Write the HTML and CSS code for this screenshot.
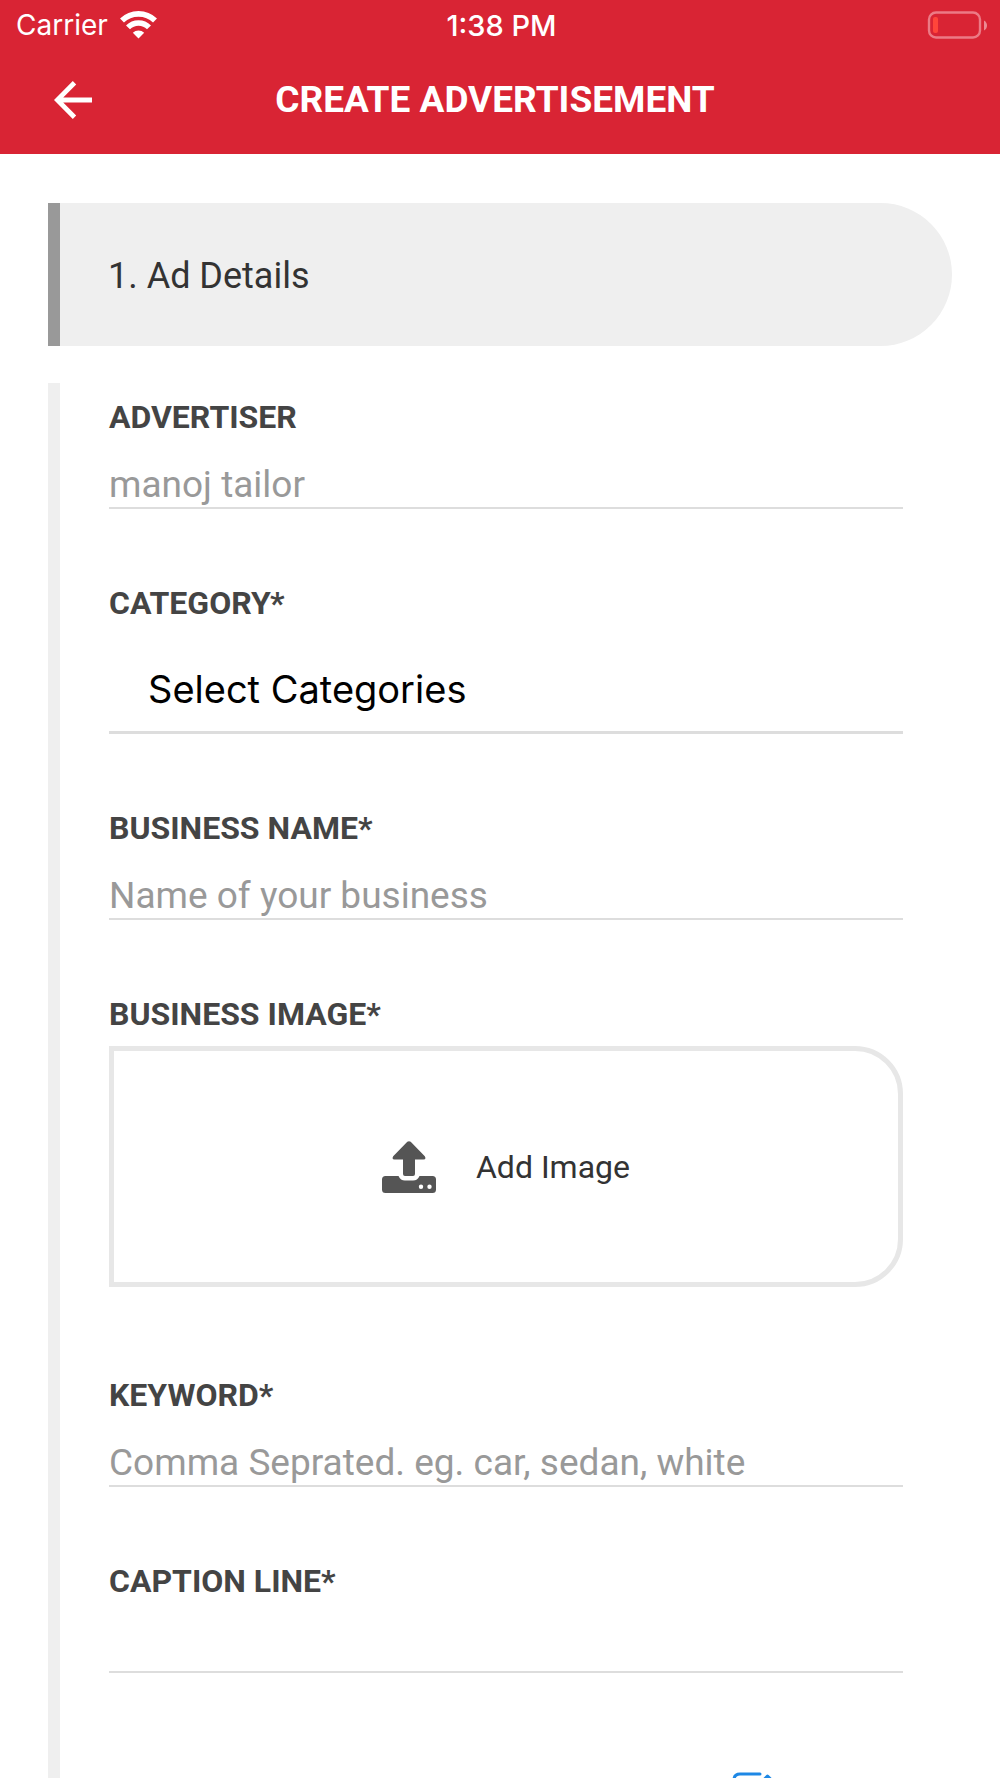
FILE: index.html
```
<!DOCTYPE html>
<html lang="en">
<head>
    <meta charset="UTF-8">
    <meta name="viewport" content="width=device-width, initial-scale=1.0">
    <title>Create Advertisement</title>
    <link rel="stylesheet" href="styles.css">
</head>
<body>

    <header class="header">
        <div class="status-bar">
            <div class="carrier">
                <span>Carrier</span>
                <svg width="37" height="28" viewBox="0 0 37 28" fill="none" stroke="#fff" stroke-width="5.6">
                    <path d="M2 9.6a23.5 23.5 0 0 1 33 0"/>
                    <path d="M8 16.4a14.8 14.8 0 0 1 21 0"/>
                    <path d="M12.8 21.8a8.2 8.2 0 0 1 11.4 0L18.5 27.4z" fill="#fff" stroke="none"/>
                </svg>
            </div>
            <span class="time">1:38 PM</span>
            <div class="battery">
                <svg width="60" height="28" viewBox="0 0 60 28">
                    <rect x="2" y="1.5" width="51" height="25" rx="7" fill="none" stroke="#ec7a85" stroke-width="2.4"/>
                    <rect x="6" y="6" width="5" height="16" rx="2" fill="#ff453a"/>
                    <path d="M57 9.5c4 2 4 8 0 10z" fill="#ec8a93"/>
                </svg>
            </div>
        </div>
        <div class="nav">
            <button class="back" type="button" aria-label="Back">
                <svg width="38" height="38" viewBox="0 0 38 38" fill="none" stroke="#fff" stroke-width="4.8">
                    <path d="M38 19H4M20.5 1.8L3.3 19l17.2 17.2"/>
                </svg>
            </button>
            <h1>CREATE ADVERTISEMENT</h1>
        </div>
    </header>

    <main>
        <h2>1. Ad Details</h2>

        <form class="ad-form">
            <div class="field">
                <label for="advertiser">ADVERTISER</label>
                <input type="text" id="advertiser" placeholder="manoj tailor">
            </div>
            <div class="field">
                <label for="category">CATEGORY*</label>
                <select id="category">
                    <option>Select Categories</option>
                </select>
            </div>
            <div class="field">
                <label for="businessName">BUSINESS NAME*</label>
                <input type="text" id="businessName" placeholder="Name of your business">
            </div>
            <div class="field image-field">
                <label for="businessImage">BUSINESS IMAGE*</label>
                <button class="upload" type="button" id="businessImage">
                    <svg width="54" height="52" viewBox="0 0 54 52" fill="#555">
                        <path d="M25.3 .8Q27 -.5 28.7 .8L42.8 15.2Q44.5 18.5 41.5 18.5H33V33Q33 35 31 35H23Q21 35 21 33V18.5H12.5Q9.5 18.5 11.2 15.2z"/>
                        <path fill-rule="evenodd" d="M3.5 35H16.5Q18.5 39.5 23 39.5H31Q35.5 39.5 37.5 35H50.5Q54 35 54 38.5V48.5Q54 52 50.5 52H3.5Q0 52 0 48.5V38.5Q0 35 3.5 35zM39 43.5a2.2 2.2 0 1 0 0 4.4a2.2 2.2 0 1 0 0-4.4zM47.5 43.5a2.2 2.2 0 1 0 0 4.4a2.2 2.2 0 1 0 0-4.4z"/>
                    </svg>
                    <span>Add Image</span>
                </button>
            </div>
            <div class="field">
                <label for="keyword">KEYWORD*</label>
                <input type="text" id="keyword" placeholder="Comma Seprated. eg. car, sedan, white">
            </div>
            <div class="field">
                <label for="caption">CAPTION LINE*</label>
                <input type="text" id="caption">
            </div>
            <div class="edit-row">
                <button class="edit" type="button" aria-label="Edit">
                    <svg width="44" height="44" viewBox="0 0 44 44" fill="none" stroke="#1e88e5" stroke-width="3" stroke-linecap="round" stroke-linejoin="round">
                        <path d="M28 2H8Q2 2 2 8v28q0 6 6 6h22q6 0 6-6V22"/>
                        <path d="M35.5 4l5 5L22 28l-7 2 2-7z"/>
                    </svg>
                </button>
            </div>
        </form>
    </main>

</body>
</html>
```
FILE: styles.css
```
* { box-sizing: border-box; }
body { display: flex; flex-direction: column; height: 100vh; margin: 0; font-family: Roboto, sans-serif; background-color: white; }
h1, h2 { margin: 0; }
svg { display: block; flex: none; }
button { padding: 0; border: none; background: none; font-family: inherit; cursor: pointer; }

.header { flex: none; color: white; background-color: #d92434; }
.status-bar { display: grid; grid-template-columns: 1fr auto 1fr; align-items: center; height: 50px; padding: 0 13px 0 16px; font-family: Inter, sans-serif; font-size: 28px; }
.carrier { display: flex; align-items: center; gap: 12px; }
.time { font-size: 29px; font-weight: 500; }
.battery { justify-self: end; }
.nav { display: grid; grid-template-columns: 60px 1fr 60px; align-items: center; height: 104px; padding: 0 64px 4px 54px; }
.nav h1 { font-size: 37px; font-weight: 700; line-height: 48px; text-align: center; white-space: nowrap; }

main { flex: 1; min-height: 0; padding: 49px 48px 0; overflow-y: auto; scrollbar-width: none; }
main h2 { height: 143px; padding-left: 48px; border-left: 12px solid #999; border-radius: 0 72px 72px 0; background-color: #efefef; color: #333; font-size: 36px; font-weight: 400; line-height: 147px; }

.ad-form { margin-top: 37px; padding: 14px 49px 48px; border-left: 12px solid #efefef; }
.field { display: flex; flex-direction: column; margin-bottom: 74px; }
.field label { color: #444; font-size: 32px; font-weight: 700; line-height: 41px; }
.field input, .field select { width: 100%; border: none; border-radius: 0; background: none; outline: none; }
.field input { height: 71px; padding: 24px 0 0; border-bottom: 2px solid #ddd; color: #333; font-family: inherit; font-size: 37px; }
.field input::placeholder { color: #999; }
.field select { height: 110px; padding: 22px 39px 0; border-bottom: 3px solid #ddd; color: black; font-family: Inter, sans-serif; font-size: 38px; appearance: none; }

.image-field { margin-bottom: 88px; }
.upload { display: flex; align-items: center; justify-content: center; gap: 40px; height: 241px; margin-top: 11px; border: 5px solid #e7e7e7; border-radius: 0 48px 48px 0; color: #333; font-size: 32px; }

.edit-row { display: flex; justify-content: flex-end; padding: 25px 127px 0 0; }
```
